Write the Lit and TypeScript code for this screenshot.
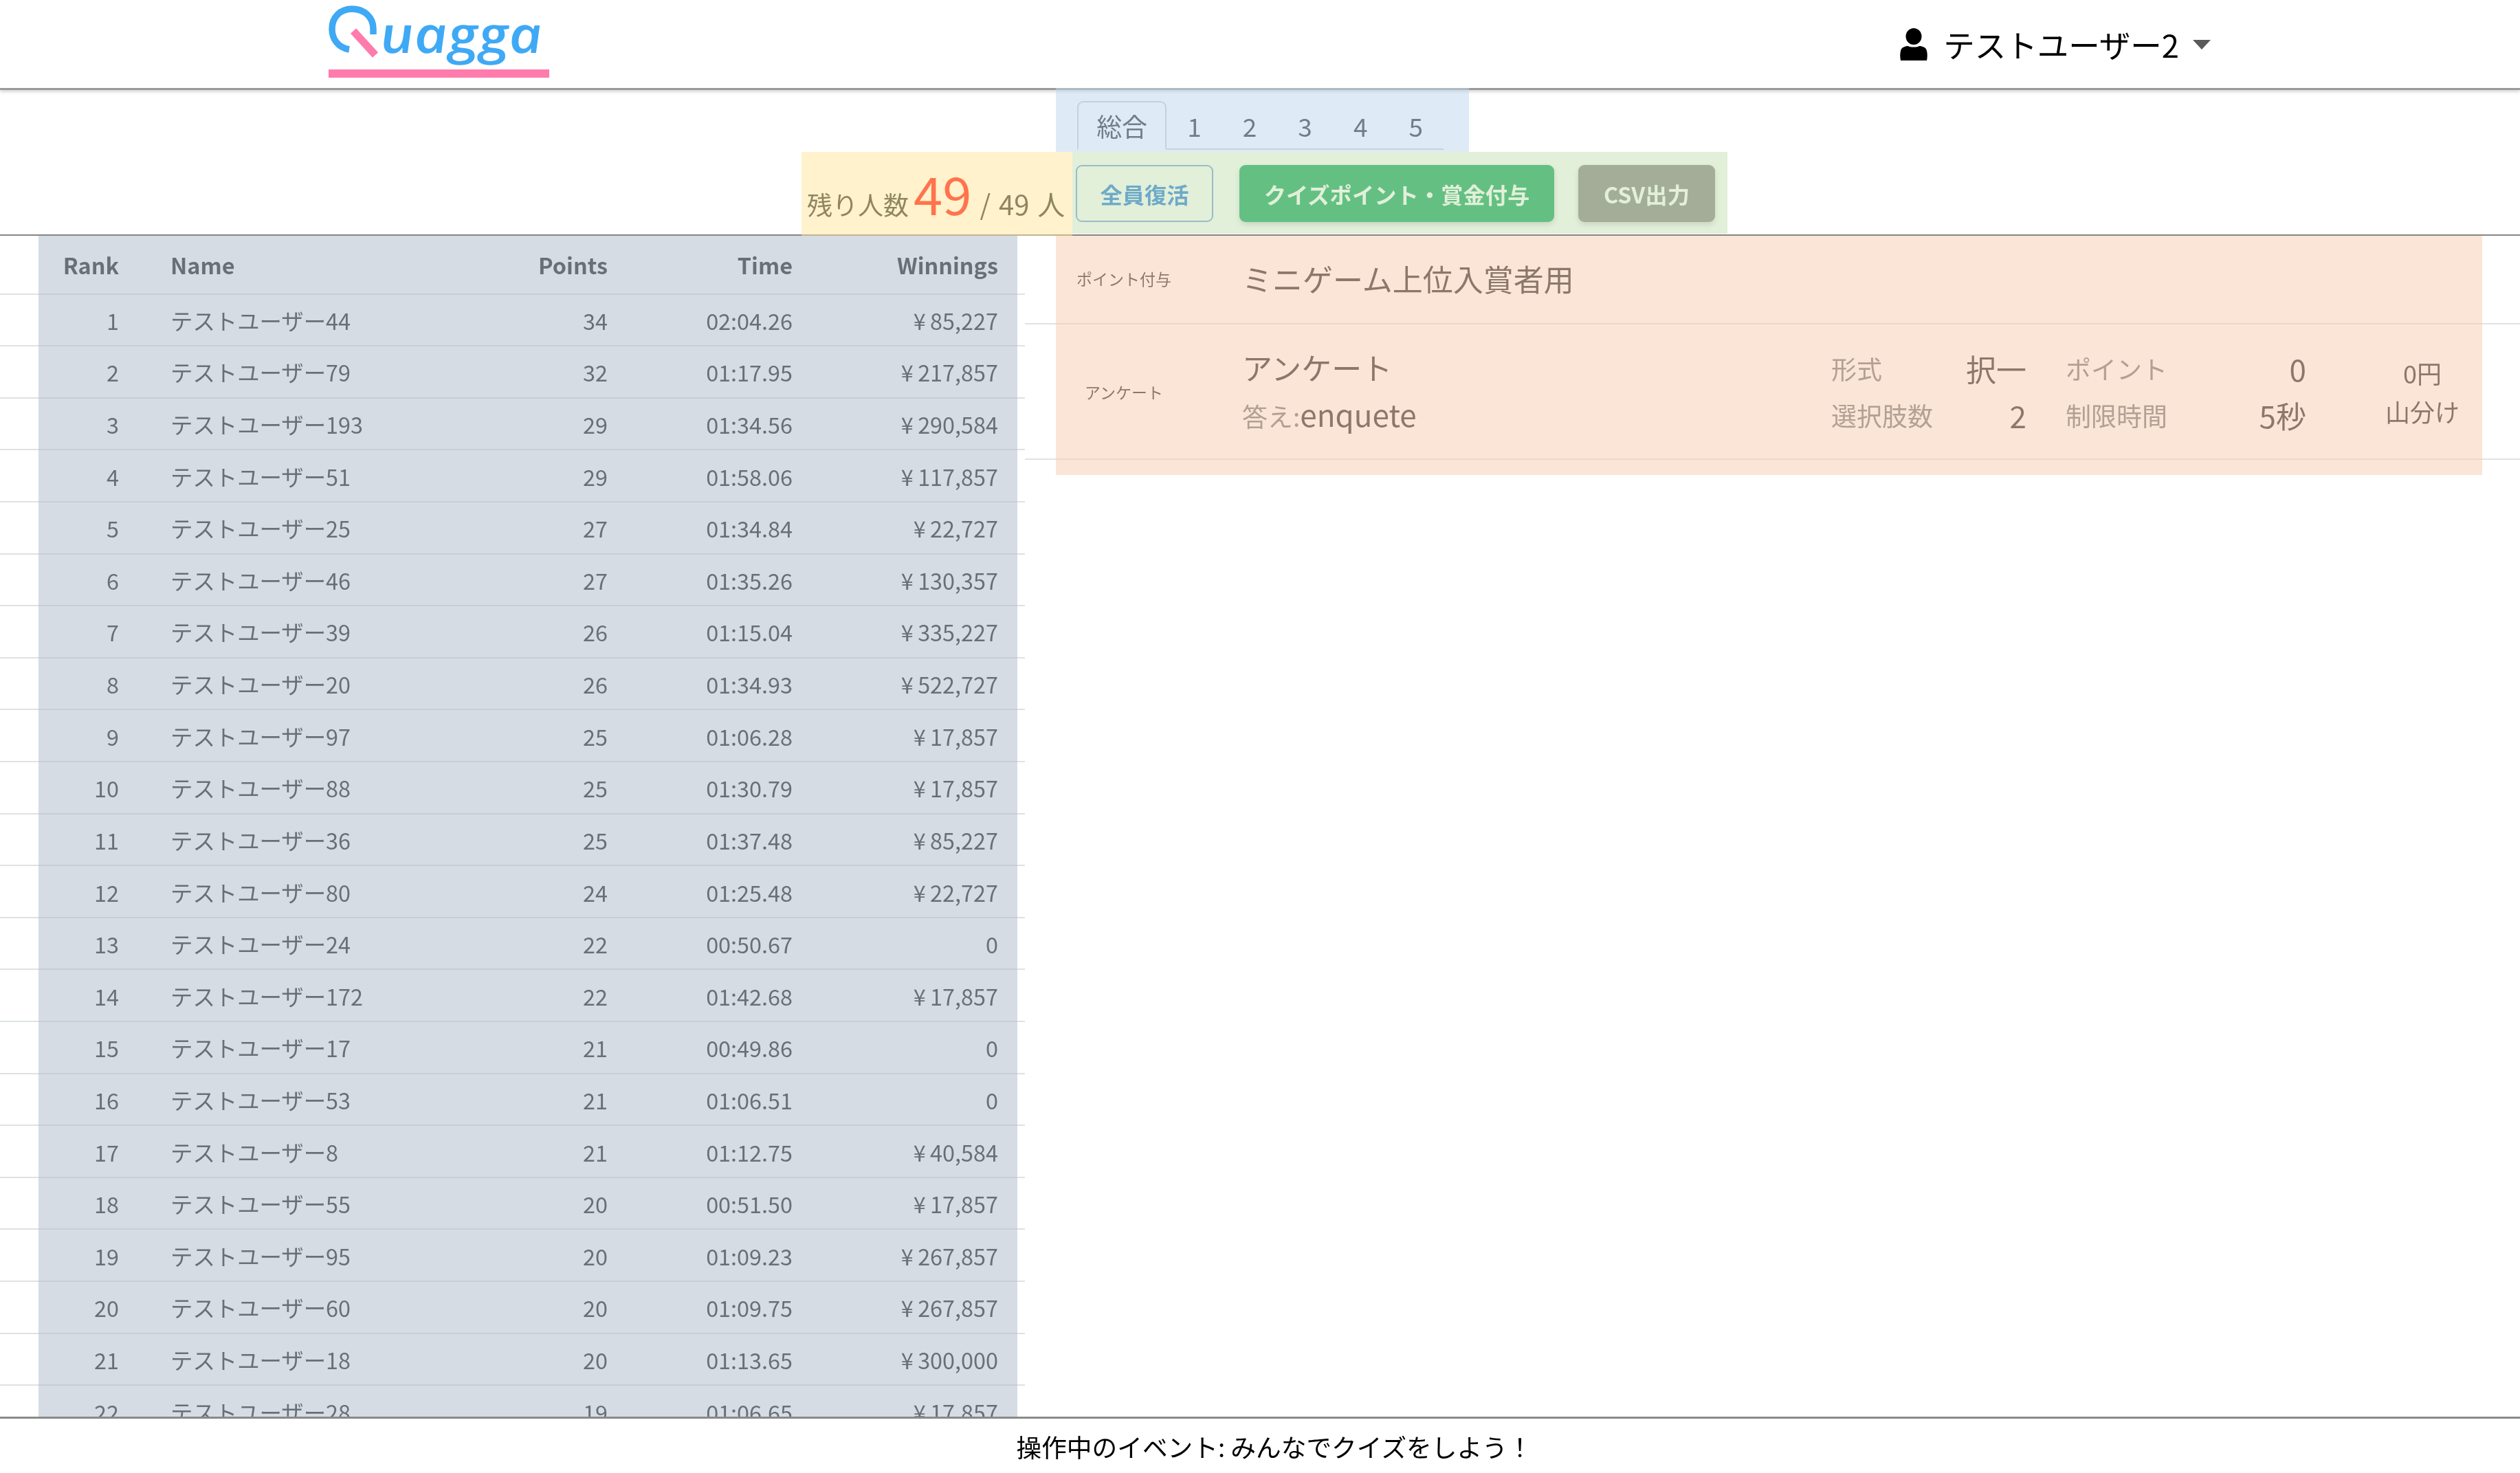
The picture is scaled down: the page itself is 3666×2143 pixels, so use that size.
import { LitElement, html, css } from "lit";
import { customElement } from "lit/decorators.js";

const Y = "¥\u2009";
const ROWS: [number, string, number, string, string][] = [
  [1, "テストユーザー44", 34, "02:04.26", Y + "85,227"],
  [2, "テストユーザー79", 32, "01:17.95", Y + "217,857"],
  [3, "テストユーザー193", 29, "01:34.56", Y + "290,584"],
  [4, "テストユーザー51", 29, "01:58.06", Y + "117,857"],
  [5, "テストユーザー25", 27, "01:34.84", Y + "22,727"],
  [6, "テストユーザー46", 27, "01:35.26", Y + "130,357"],
  [7, "テストユーザー39", 26, "01:15.04", Y + "335,227"],
  [8, "テストユーザー20", 26, "01:34.93", Y + "522,727"],
  [9, "テストユーザー97", 25, "01:06.28", Y + "17,857"],
  [10, "テストユーザー88", 25, "01:30.79", Y + "17,857"],
  [11, "テストユーザー36", 25, "01:37.48", Y + "85,227"],
  [12, "テストユーザー80", 24, "01:25.48", Y + "22,727"],
  [13, "テストユーザー24", 22, "00:50.67", "0"],
  [14, "テストユーザー172", 22, "01:42.68", Y + "17,857"],
  [15, "テストユーザー17", 21, "00:49.86", "0"],
  [16, "テストユーザー53", 21, "01:06.51", "0"],
  [17, "テストユーザー8", 21, "01:12.75", Y + "40,584"],
  [18, "テストユーザー55", 20, "00:51.50", Y + "17,857"],
  [19, "テストユーザー95", 20, "01:09.23", Y + "267,857"],
  [20, "テストユーザー60", 20, "01:09.75", Y + "267,857"],
  [21, "テストユーザー18", 20, "01:13.65", Y + "300,000"],
  [22, "テストユーザー28", 19, "01:06.65", Y + "17,857"],
];

@customElement("app-root")
export class AppRoot extends LitElement {
  static styles = css`
    :host {
      display: flex;
      flex-direction: column;
      height: 100vh;
      overflow: hidden;
      background: #fff;
      color: #212529;
      font-family: "Noto Sans CJK JP", "Noto Sans", sans-serif;
      font-size: 37px;
      filter: blur(0.7px);
    }
    .tint {
      position: absolute;
      pointer-events: none;
      opacity: 0.5;
    }
    .tint.blue {
      left: 1536px;
      top: -3px;
      width: 601px;
      height: 93px;
      background: #bdd7ee;
    }
    .tint.yellow {
      left: 1166px;
      top: 90px;
      width: 394px;
      height: 122px;
      background: #ffe699;
    }
    .tint.green {
      left: 1560px;
      top: 90px;
      width: 953px;
      height: 119px;
      background: #c5e0b4;
    }

    /* header */
    .header {
      box-sizing: border-box;
      flex: none;
      height: 131px;
      display: flex;
      align-items: flex-start;
      justify-content: space-between;
      padding: 0 450px 0 478px;
      border-bottom: 3px solid #9a9a9a;
      box-shadow: 0 3px 4px rgba(0, 0, 0, 0.15);
    }
    .logo {
      display: block;
      width: 322px;
      height: 114px;
      overflow: visible;
    }
    .logo text {
      font-family: "Open Sans", sans-serif;
      font-style: italic;
      font-weight: 600;
      font-size: 74px;
      fill: #3fa9f5;
    }
    .user {
      display: flex;
      align-items: center;
      height: 128px;
      font-size: 45.5px;
      color: #000;
    }
    .user svg {
      width: 40px;
      height: 47px;
      margin-right: 23px;
    }
    .caret {
      width: 0;
      height: 0;
      margin-left: 20px;
      margin-top: 2px;
      border-left: 13px solid transparent;
      border-right: 13px solid transparent;
      border-top: 14px solid #5a5a5a;
    }

    /* toolbar */
    .toolbar {
      box-sizing: border-box;
      flex: none;
      position: relative;
      height: 212px;
      border-bottom: 2px solid #858585;
    }
    .tabs {
      box-sizing: border-box;
      display: flex;
      width: 533px;
      height: 71px;
      margin: 16px 0 0 1567px;
      border-bottom: 2px solid #c8ccd0;
    }
    .tab {
      display: flex;
      align-items: center;
      padding: 0 30px;
      height: 71px;
      box-sizing: border-box;
    }
    .tab.active {
      width: 134px;
      justify-content: center;
      padding: 0;
      border: 2px solid #c8ccd0;
      border-bottom: 2px solid #fff;
      border-radius: 9px 9px 0 0;
    }
    .actions {
      display: flex;
      align-items: flex-start;
      margin-top: 7px;
      height: 118px;
    }
    .status {
      display: flex;
      align-items: baseline;
      box-sizing: border-box;
      width: 399px;
      margin-left: 1166px;
      padding: 0 0 0 8px;
      height: 118px;
      line-height: 110px;
      white-space: pre;
    }
    .count {
      font-size: 76px;
      color: #ff0000;
      margin: 0 12px 0 7px;
    }
    .rest {
      font-size: 40px;
      word-spacing: 3px;
    }
    .btn {
      box-sizing: border-box;
      display: flex;
      align-items: center;
      justify-content: center;
      height: 83px;
      margin-top: 15px;
      border-radius: 9px;
      font-size: 32.3px;
      font-weight: 700;
      color: #fff;
      box-shadow: 0 4px 8px rgba(0, 0, 0, 0.2);
    }
    .btn.outline {
      width: 200px;
      background: #fff;
      color: #1774dc;
      border: 2px solid #679cdc;
      box-shadow: none;
    }
    .btn.primary {
      width: 458px;
      margin-left: 38px;
      background: #00a050;
    }
    .btn.csv {
      width: 199px;
      margin-left: 35px;
      background: #827a7d;
    }

    /* main */
    .main {
      flex: 1;
      min-height: 0;
      display: flex;
      overflow: hidden;
    }
    .board {
      flex: none;
      position: relative;
      width: 1491px;
      overflow: hidden;
      font-size: 32.4px;
    }
    .board .tint {
      left: 56px;
      right: 11px;
      top: 0;
      bottom: 0;
      background: #adb9ca;
    }
    .row {
      box-sizing: border-box;
      display: grid;
      grid-template-columns: 173px 1fr 150px 269px 299px;
      align-items: center;
      height: 75.62px;
      padding-right: 39px;
      border-bottom: 2px solid #dee2e6;
    }
    .row.head {
      height: 85.5px;
      font-weight: 700;
    }
    .num {
      text-align: right;
      white-space: nowrap;
    }
    .name {
      padding-left: 75px;
    }

    /* panel */
    .panel {
      flex: 1;
      position: relative;
    }
    .panel .tint {
      left: 45px;
      right: 55px;
      top: 0;
      height: 348px;
      background: #f8cbad;
    }
    .item {
      box-sizing: border-box;
      display: grid;
      grid-template-columns: 198px 73px 857px 284px 57px 350px 84px 170px;
      align-items: center;
      padding-left: 45px;
      border-bottom: 2px solid #dee2e6;
    }
    .item.bonus {
      height: 129px;
      padding-bottom: 4px;
    }
    .item.survey {
      height: 197px;
    }
    .kind {
      grid-column: 1;
      font-size: 23px;
      text-align: center;
    }
    .title {
      grid-column: 3;
      font-size: 44px;
      line-height: 68px;
    }
    .answer {
      display: block;
    }
    .muted {
      color: #6c757d;
      font-size: 37px;
    }
    .stats {
      display: flex;
      flex-direction: column;
    }
    .stats.first {
      grid-column: 4;
    }
    .stats.second {
      grid-column: 6;
    }
    .stat {
      display: flex;
      justify-content: space-between;
      align-items: center;
      height: 68px;
    }
    .val {
      font-size: 44px;
    }
    .pay {
      grid-column: 8;
      display: flex;
      flex-direction: column;
      align-items: center;
      gap: 10px;
      line-height: 46px;
      font-size: 36px;
    }

    /* footer */
    .footer {
      box-sizing: border-box;
      flex: none;
      height: 82px;
      display: flex;
      align-items: center;
      justify-content: center;
      padding-left: 42px;
      border-top: 3px solid #8a8a8a;
      color: #000;
      font-size: 36.7px;
    }
  `;

  render() {
    return html`
      <div class="header">
        <svg class="logo" viewBox="0 0 322 114" aria-label="Quagga">
          <path d="M30 72 C13 69 5 56 5 42 C5 25 17 13 34 13 C52 13 65 25 65 42 L65 50" fill="none" stroke="#3fa9f5" stroke-width="9.5" />
          <path d="M36 45 L68 80" fill="none" stroke="#ff7bac" stroke-width="11" />
          <text transform="translate(77 77) skewX(6)" textLength="236" lengthAdjust="spacingAndGlyphs">uagga</text>
          <rect x="0" y="101" width="321" height="12" fill="#ff7bac" />
        </svg>
        <div class="user">
          <svg viewBox="0 0 40 47" aria-hidden="true">
            <ellipse cx="20" cy="12" rx="11.5" ry="12" fill="#000" />
            <path d="M1 47 C0 42 0 37 1 33 C2 28 7 26 12 26 C15 28 25 28 28 26 C33 26 38 28 39 33 C40 37 40 42 39 47 Z" fill="#000" />
          </svg>
          テストユーザー2
          <span class="caret"></span>
        </div>
      </div>

      <div class="toolbar">
        <div class="tabs">
          <div class="tab active">総合</div>
          ${[1, 2, 3, 4, 5].map((n) => html`<div class="tab">${n}</div>`)}
        </div>
        <div class="actions">
          <div class="status">残り人数<span class="count">49</span><span class="rest">/ 49 人</span></div>
          <div class="btn outline">全員復活</div>
          <div class="btn primary">クイズポイント・賞金付与</div>
          <div class="btn csv">CSV出力</div>
        </div>
        <div class="tint blue"></div>
        <div class="tint yellow"></div>
        <div class="tint green"></div>
      </div>

      <div class="main">
        <div class="board">
          <div class="row head">
            <div class="num">Rank</div>
            <div class="name">Name</div>
            <div class="num">Points</div>
            <div class="num">Time</div>
            <div class="num">Winnings</div>
          </div>
          ${ROWS.map(
            (r) => html`<div class="row">
              <div class="num">${r[0]}</div>
              <div class="name">${r[1]}</div>
              <div class="num">${r[2]}</div>
              <div class="num">${r[3]}</div>
              <div class="num">${r[4]}</div>
            </div>`
          )}
          <div class="tint"></div>
        </div>
        <div class="panel">
          <div class="item bonus">
            <div class="kind">ポイント付与</div>
            <div class="title">ミニゲーム上位入賞者用</div>
          </div>
          <div class="item survey">
            <div class="kind">アンケート</div>
            <div class="title">
              アンケート
              <span class="answer"><span class="muted">答え:</span>enquete</span>
            </div>
            <div class="stats first">
              <div class="stat"><span class="muted">形式</span><span class="val">択一</span></div>
              <div class="stat"><span class="muted">選択肢数</span><span class="val">2</span></div>
            </div>
            <div class="stats second">
              <div class="stat"><span class="muted">ポイント</span><span class="val">0</span></div>
              <div class="stat"><span class="muted">制限時間</span><span class="val">5秒</span></div>
            </div>
            <div class="pay"><span>0円</span><span>山分け</span></div>
          </div>
          <div class="tint"></div>
        </div>
      </div>

      <div class="footer">操作中のイベント: みんなでクイズをしよう！</div>
    `;
  }
}
